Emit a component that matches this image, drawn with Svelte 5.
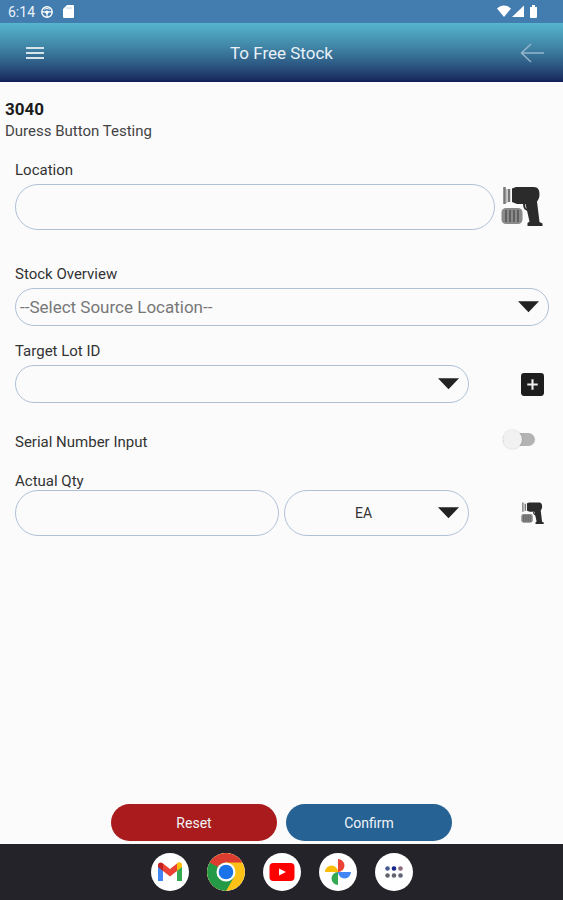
<script lang="ts">
  let location = $state("");
  let source = $state("");
  let lot = $state("");
  let serialInput = $state(false);
  let qty = $state("");
  let unit = $state("EA");

  const reset = () => {
    location = "";
    source = "";
    lot = "";
    serialInput = false;
    qty = "";
    unit = "EA";
  };
</script>

{#snippet arrow()}
  <svg class="arrow" viewBox="0 0 22 12" aria-hidden="true">
    <path d="M0 0h22L11 11.500z" fill="#222" />
  </svg>
{/snippet}

{#snippet scanner()}
  <svg viewBox="0 0 42 42" aria-hidden="true">
    <path d="M3.500 1v17M8 3v13" stroke="#777" stroke-width="2.500" />
    <path d="M5.800 3v14" stroke="#bbb" stroke-width="1.500" />
    <path
      d="M11 2.500L15 1h17.500c5 0 6 3.500 6 7.500 0 3-1 5-2.500 7L38.500 36l3 1.500V40H26.500v-3l2-1.500-4-17.500H16l-5-2z"
      fill="#2b2b2b"
    />
    <path d="M23 18c0 4 1 6 5 6" fill="none" stroke="#2b2b2b" stroke-width="2" />
    <rect x="0.500" y="22" width="21" height="16" rx="4.500" fill="#8a8a8a" />
    <path d="M5 24v12M9 24v12M13 24v12M17 24v12" stroke="#5c5c5c" stroke-width="1.800" />
  </svg>
{/snippet}

<div class="screen">
  <div class="status">
    <span>6:14</span>
    <svg width="12" height="12" viewBox="0 0 12 12" fill="none" stroke="#fff">
      <circle cx="6" cy="6" r="5.200" stroke-width="1.400" />
      <circle cx="6" cy="6.300" r="1.300" fill="#fff" />
      <path d="M1 5.800h10M6 7v4" stroke-width="1.200" />
      <path d="M3 3.300c2-1 4-1 6 0" stroke-width="1" />
    </svg>
    <svg class="sd" width="11" height="13" viewBox="0 0 11 13">
      <path d="M4 0h6a1 1 0 0 1 1 1v11a1 1 0 0 1-1 1H1a1 1 0 0 1-1-1V4z" fill="#fff" />
      <path d="M4 2v2M6 2v2M8 2v2" stroke="#a9c5dd" stroke-width="0.800" />
    </svg>
    <svg class="signals" width="42" height="13" viewBox="0 0 42 13" fill="#fff">
      <path d="M0 3.500C4-.5 10-.5 14 3.500L7 12z" />
      <path d="M27 .5V12H15z" />
      <path d="M33 2h2V0h3v2h2v10a1 1 0 0 1-1 1h-5a1 1 0 0 1-1-1z" />
    </svg>
  </div>

  <header>
    <button class="icon" aria-label="Menu">
      <svg width="18" height="14" viewBox="0 0 18 14" stroke="#d6e3ea" stroke-width="2">
        <path d="M0 2h18M0 7h18M0 12h18" />
      </svg>
    </button>
    <h1>To Free Stock</h1>
    <button class="icon" aria-label="Back">
      <svg width="24" height="20" viewBox="0 0 24 20" fill="none" stroke="#93b5cb" stroke-width="1.500">
        <path d="M24 10H1M11 1L1.500 10l9.500 9" />
      </svg>
    </button>
  </header>

  <main>
    <h2>3040</h2>
    <p>Duress Button Testing</p>

    <form id="stock" onsubmit={(e) => e.preventDefault()}>
      <div class="field location">
        <label for="location">Location</label>
        <div class="row wide">
          <input id="location" type="text" bind:value={location} />
          <button type="button" class="icon scan" aria-label="Scan location">{@render scanner()}</button>
        </div>
      </div>

      <div class="field">
        <label for="source">Stock Overview</label>
        <div class="select">
          <select id="source" class="source" bind:value={source}>
            <option value="">--Select Source Location--</option>
          </select>
          {@render arrow()}
        </div>
      </div>

      <div class="field">
        <label for="lot">Target Lot ID</label>
        <div class="row">
          <div class="select">
            <select id="lot" bind:value={lot}>
              <option value=""></option>
            </select>
            {@render arrow()}
          </div>
          <button type="button" class="icon small" aria-label="Add lot">
            <svg viewBox="0 0 22 22">
              <rect width="22" height="22" rx="3" fill="#1d1d1d" />
              <path d="M11 6v10M6 11h10" stroke="#eee" stroke-width="2" />
            </svg>
          </button>
        </div>
      </div>

      <div class="row serial">
        <label for="serial">Serial Number Input</label>
        <input id="serial" type="checkbox" role="switch" bind:checked={serialInput} />
      </div>

      <div class="field qty">
        <label for="qty">Actual Qty</label>
        <div class="row">
          <div class="amount">
            <input id="qty" type="text" inputmode="decimal" bind:value={qty} />
            <div class="select">
              <select class="unit" aria-label="Unit" bind:value={unit}>
                <option>EA</option>
              </select>
              {@render arrow()}
            </div>
          </div>
          <button type="button" class="icon small" aria-label="Scan quantity">{@render scanner()}</button>
        </div>
      </div>
    </form>
  </main>

  <div class="actions">
    <button class="reset" type="button" onclick={reset}>Reset</button>
    <button class="confirm" type="submit" form="stock">Confirm</button>
  </div>

  <nav>
    <button aria-label="Gmail">
      <svg viewBox="0 0 38 38">
        <path d="M7 12v16h5V16z" fill="#4285f4" />
        <path d="M26 16v12h5V12z" fill="#34a853" />
        <path d="M26 12v6l5-4v-2c0-3-3-3.500-5-2z" fill="#fbbc04" />
        <path d="M12 10.500l7 5.500 7-5.500V18l-7 5.500-7-5.500z" fill="#ea4335" />
        <path d="M7 12v2l5 4v-7.500C10 8.500 7 9.500 7 12z" fill="#c5221f" />
      </svg>
    </button>
    <button aria-label="Chrome">
      <svg viewBox="0 0 38 38">
        <circle cx="19" cy="19" r="19" fill="#fbc116" />
        <path d="M2.550 9.500A19 19 0 0 0 19 38l8.200-14.200L19 19V9.500z" fill="#249a47" />
        <path d="M2.550 9.500A19 19 0 0 1 35.450 9.500H19a9.500 9.500 0 0 0-8.800 6z" fill="#dc3d30" />
        <path d="M2.550 9.500l8.250 14.300L13 15z" fill="#249a47" />
        <circle cx="19" cy="19" r="9.500" fill="#fff" />
        <circle cx="19" cy="19" r="7.300" fill="#1a73e8" />
      </svg>
    </button>
    <button aria-label="YouTube">
      <svg viewBox="0 0 38 38">
        <rect x="6.500" y="10" width="25" height="18" rx="4" fill="#f00" />
        <path d="M16 15.500l7 3.500-7 3.500z" fill="#fff" />
      </svg>
    </button>
    <button aria-label="Photos">
      <svg viewBox="0 0 38 38">
        <path d="M19 6a6.500 6.500 0 0 1 0 13z" fill="#ea4335" />
        <path d="M32 19a6.500 6.500 0 0 1-13 0z" fill="#4285f4" />
        <path d="M19 32a6.500 6.500 0 0 1 0-13z" fill="#34a853" />
        <path d="M6 19a6.500 6.500 0 0 1 13 0z" fill="#fbbc04" />
      </svg>
    </button>
    <button aria-label="All apps">
      <svg viewBox="0 0 38 38">
        <circle cx="12.500" cy="15.500" r="2.300" fill="#4a5b94" />
        <circle cx="19" cy="15.500" r="2.300" fill="#18278c" />
        <circle cx="25.500" cy="15.500" r="2.300" fill="#8a6c7c" />
        <circle cx="12.500" cy="22.500" r="2.300" fill="#62646e" />
        <circle cx="19" cy="22.500" r="2.300" fill="#62646e" />
        <circle cx="25.500" cy="22.500" r="2.300" fill="#62647a" />
      </svg>
    </button>
  </nav>
</div>

<style>
  :global(body) {
    margin: 0;
    background: #fbfbfc;
  }
  .screen {
    display: flex;
    flex-direction: column;
    min-height: 100vh;
    font-family: Roboto, "Liberation Sans", sans-serif;
    font-size: 14px;
    color: #333;
  }
  svg {
    display: block;
  }
  button,
  input,
  select {
    box-sizing: border-box;
    margin: 0;
    font: inherit;
  }
  button {
    padding: 0;
    border: none;
    cursor: pointer;
  }
  h1,
  h2,
  p {
    margin: 0;
  }

  .status {
    display: flex;
    align-items: center;
    gap: 6px;
    height: 23px;
    padding: 0 24px 0 8px;
    background: #437cae;
    color: #e8f1f8;
  }
  .sd {
    margin-left: 4px;
  }
  .signals {
    margin-left: auto;
  }

  header {
    display: grid;
    grid-template-columns: 70px 1fr 62px;
    align-items: center;
    height: 59px;
    background: linear-gradient(#56b6cf, #3e7fa1 45%, #29527e 75%, #1b2e61 95%, #101d55);
  }
  header .icon {
    justify-self: center;
  }
  h1 {
    padding-right: 8px;
    text-align: center;
    font-size: 17px;
    font-weight: 400;
    line-height: 24px;
    color: #e9f1f8;
  }
  .icon {
    background: none;
  }

  main {
    flex: 1;
    padding: 16px 14px 0 15px;
  }
  h2,
  p {
    margin-left: -10px;
  }
  h2 {
    font-size: 17px;
    line-height: 22px;
    color: #1c1c1c;
  }
  p {
    font-size: 15px;
    line-height: 22px;
    color: #444;
  }
  form {
    padding-top: 19px;
  }
  .field {
    display: flex;
    flex-direction: column;
    gap: 5px;
    margin-bottom: 16px;
  }
  .location {
    margin-bottom: 35px;
  }
  .qty {
    gap: 0;
  }
  label {
    font-size: 15px;
    line-height: 18px;
  }
  .row {
    display: grid;
    grid-template-columns: 1fr 80px;
    align-items: center;
  }
  .wide {
    grid-template-columns: 1fr 54px;
  }
  .serial {
    align-items: start;
    margin: 30px 0 21px;
  }
  .amount {
    display: grid;
    grid-template-columns: 264fr 185fr;
    gap: 5px;
  }
  input[type="text"],
  select {
    width: 100%;
    height: 46px;
    padding: 0 20px;
    border: 1px solid #b0c1d6;
    border-radius: 23px;
    background: transparent;
    color: #333;
  }
  select {
    display: block;
    height: 38px;
    padding: 0 36px 0 4px;
    appearance: none;
  }
  .source {
    font-size: 17px;
    color: #777;
  }
  .unit {
    height: 46px;
    padding: 0 30px 0 4px;
    text-align: center;
    text-align-last: center;
  }
  .select {
    position: relative;
  }
  .arrow {
    position: absolute;
    right: 10px;
    top: 50%;
    width: 21px;
    height: 12px;
    transform: translateY(-50%);
    pointer-events: none;
  }
  .scan {
    width: 42px;
    justify-self: center;
  }
  .small {
    width: 23px;
    margin-right: 5px;
    justify-self: end;
  }
  input[type="checkbox"] {
    display: flex;
    align-items: center;
    justify-self: end;
    width: 32px;
    height: 13px;
    margin-right: 14px;
    border-radius: 7px;
    background: #b3b3b3;
    appearance: none;
  }
  input[type="checkbox"]::before {
    content: "";
    width: 19px;
    height: 19px;
    flex: none;
    border-radius: 50%;
    background: #f1f1f1;
    box-shadow: 0 0 2px rgb(0 0 0 / 0.2);
  }
  input[type="checkbox"]:checked::before {
    margin-left: auto;
  }

  .actions {
    display: flex;
    justify-content: center;
    gap: 9px;
    padding: 0 0 3px;
  }
  .actions button {
    width: 166px;
    height: 37px;
    border-radius: 19px;
    color: #f0f3f6;
  }
  .reset {
    background: #a91b1c;
  }
  .confirm {
    background: #266294;
  }

  nav {
    display: flex;
    align-items: center;
    justify-content: center;
    gap: 18px;
    height: 56px;
    background: #242329;
  }
  nav button {
    width: 38px;
    height: 38px;
    border-radius: 50%;
    background: #fff;
    overflow: hidden;
  }
</style>
